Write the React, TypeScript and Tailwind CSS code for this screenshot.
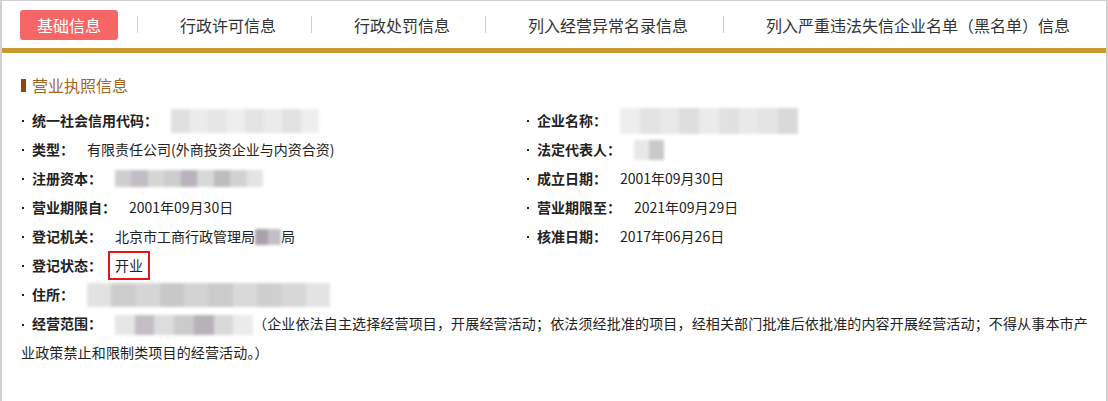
import React from 'react';

const tabs = ['行政许可信息', '行政处罚信息', '列入经营异常名录信息', '列入严重违法失信企业名单（黑名单）信息'];

// mosaic stand-in for the blurred values
const Mosaic = ({ className, cells }: { className: string; cells: string[] }) => (
  <span className={`inline-flex align-middle blur-[1.5px] ${className}`}>
    {cells.map((c, i) => (
      <span key={i} className={`flex-1 h-full ${c}`} />
    ))}
  </span>
);

const Dot = () => <span className="w-[2px] h-[2px] bg-[#222] ml-[1px] mr-[8px] shrink-0" />;

const Field = ({ label, children }: { label: string; children?: React.ReactNode }) => (
  <div className="flex items-center h-[29px]">
    <Dot />
    <span className="font-bold text-[#222]">{label}：</span>
    <span className="ml-[13px] flex items-center text-[#222]">{children}</span>
  </div>
);

export default function App() {
  return (
    <div className="w-[1108px] h-[401px] bg-white border-t border-t-[#d0d0d0] border-x-2 border-x-[#d0d0d0] font-['Microsoft_YaHei','Noto_Sans_CJK_SC',sans-serif] text-[14px] overflow-hidden">
      {/* Tabs */}
      <div className="flex items-center h-[47px] pl-[18px]">
        <div className="h-[30px] px-[17px] rounded-[3px] bg-[#f76666] text-white text-[16px] leading-[30px]">基础信息</div>
        <div className="flex items-center ml-[19px]">
          {tabs.map(t => (
            <div key={t} className="flex items-center">
              <span className="w-px h-[17px] bg-[#cfcfcf]" />
              <span className="pl-[42px] pr-[35px] text-[16px] text-[#333] leading-[30px]">{t}</span>
            </div>
          ))}
        </div>
      </div>
      <div className="h-[5px] bg-[#c9982f]" />

      <div className="pl-[19px] pr-[10px]">
        {/* Section title */}
        <div className="flex items-center h-[24px] mt-[20px]">
          <span className="w-[5px] h-[13px] bg-[#8a4a0e]" />
          <span className="ml-[6px] text-[16px] text-[#a3661f]">营业执照信息</span>
        </div>

        <div className="grid grid-cols-[505px_1fr] mt-[9px]">
          <Field label="统一社会信用代码">
            <Mosaic className="w-[148px] h-[24px]" cells={['bg-[#e0e0e0]', 'bg-[#ececec]', 'bg-[#e6e6e6]', 'bg-[#eeeeee]', 'bg-[#e4e4e4]', 'bg-[#ebebeb]', 'bg-[#e2e2e2]', 'bg-[#eeeeee]']} />
          </Field>
          <Field label="企业名称">
            <Mosaic className="w-[178px] h-[26px]" cells={['bg-[#eeeeee]', 'bg-[#e3e3e3]', 'bg-[#e8e8e8]', 'bg-[#dedede]', 'bg-[#ebebeb]', 'bg-[#e1e1e1]', 'bg-[#e9e9e9]', 'bg-[#e4e4e4]', 'bg-[#d9d9d9]']} />
          </Field>

          <Field label="类型">有限责任公司(外商投资企业与内资合资)</Field>
          <Field label="法定代表人">
            <Mosaic className="w-[30px] h-[20px]" cells={['bg-[#e8e8e8]', 'bg-[#c9c9c9]']} />
          </Field>

          <Field label="注册资本">
            <Mosaic className="w-[148px] h-[17px]" cells={['bg-[#cfcfcf]', 'bg-[#c2bcc4]', 'bg-[#d6d6d6]', 'bg-[#cdcdcd]', 'bg-[#b9b1bb]', 'bg-[#d8d8d8]', 'bg-[#bdbdbd]', 'bg-[#d2d2d2]', 'bg-[#e4e4e4]']} />
          </Field>
          <Field label="成立日期">2001年09月30日</Field>

          <Field label="营业期限自">2001年09月30日</Field>
          <Field label="营业期限至">2021年09月29日</Field>

          <Field label="登记机关">
            北京市工商行政管理局
            <Mosaic className="w-[26px] h-[16px]" cells={['bg-[#a9a2ab]', 'bg-[#c4bfc5]']} />
            局
          </Field>
          <Field label="核准日期">2017年06月26日</Field>

          <div className="flex items-center h-[29px]">
            <Dot />
            <span className="font-bold text-[#222]">登记状态：</span>
            <span className="ml-[6px] h-[29px] px-[5px] border-2 border-[#e3161c] leading-[25px] text-[#222]">开业</span>
          </div>
          <div />

          <div className="col-span-2">
            <Field label="住所">
              <Mosaic className="w-[243px] h-[24px]" cells={['bg-[#e2e2e2]', 'bg-[#cdcdcd]', 'bg-[#d6d6d6]', 'bg-[#c8c8c8]', 'bg-[#d3d3d3]', 'bg-[#cbcbcb]', 'bg-[#d9d9d9]', 'bg-[#cfcfcf]', 'bg-[#d7d7d7]', 'bg-[#e3e3e3]']} />
            </Field>
          </div>

          <div className="col-span-2 leading-[29px] text-[#222] pr-[2px]">
            <span className="inline-block align-middle w-[2px] h-[2px] bg-[#222] ml-[1px] mr-[8px]" />
            <span className="font-bold">经营范围：</span>
            <Mosaic className="ml-[13px] w-[138px] h-[20px]" cells={['bg-[#e6e6e6]', 'bg-[#c3bdc4]', 'bg-[#dddddd]', 'bg-[#cbcbcb]', 'bg-[#b7b1b8]', 'bg-[#d9d9d9]', 'bg-[#ececec]']} />
            <span className="tracking-[0.15px]">
              （企业依法自主选择经营项目，开展经营活动；依法须经批准的项目，经相关部门批准后依批准的内容开展经营活动；不得从事本市产业政策禁止和限制类项目的经营活动。）
            </span>
          </div>
        </div>
      </div>
    </div>
  );
}
